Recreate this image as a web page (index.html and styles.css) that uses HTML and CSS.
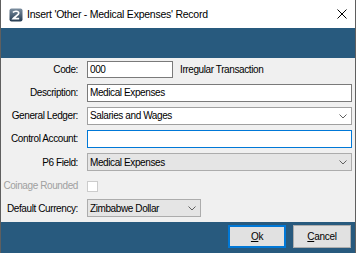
FILE: index.html
```
<!DOCTYPE html>
<html lang="en">
<head>
  <meta charset="UTF-8">
  <title>Insert Record</title>
  <link rel="stylesheet" href="styles.css">
</head>
<body>

  <div class="ventana">
    <div class="titulo">
      <svg class="icono" width="14" height="14" viewBox="0 0 14 14">
        <defs>
          <linearGradient id="g" x1="0" y1="0" x2="0" y2="1">
            <stop offset="0" stop-color="#7d8fa0"/>
            <stop offset="1" stop-color="#243b52"/>
          </linearGradient>
        </defs>
        <rect x="0.5" y="0.5" width="13" height="13" rx="2" fill="url(#g)"/>
        <path d="M4 4.5 C5 2.8 9.5 2.6 9.8 5 C10 6.8 6.5 8 4.2 10.6 L10.2 10.6" fill="none" stroke="#fff" stroke-width="1.6"/>
      </svg>
      <span class="texto-titulo">Insert 'Other - Medical Expenses' Record</span>
      <svg class="cerrar" width="10" height="10" viewBox="0 0 10 10">
        <path d="M0.5 0.5 L9.5 9.5 M9.5 0.5 L0.5 9.5" stroke="#000" stroke-width="1"/>
      </svg>
    </div>

    <div class="banda"></div>

    <div class="campos">
      <div class="fila">
        <label>Code:</label>
        <input class="caja corta" value="000">
        <span class="nota">Irregular Transaction</span>
      </div>
      <div class="fila">
        <label>Description:</label>
        <input class="caja larga" value="Medical Expenses">
      </div>
      <div class="fila">
        <label>General Ledger:</label>
        <div class="combo larga">
          <span>Salaries and Wages</span>
          <svg class="flecha" width="8" height="5" viewBox="0 0 8 5"><path d="M0.5 0.5 L4 4 L7.5 0.5" fill="none" stroke="#606060"/></svg>
        </div>
      </div>
      <div class="fila">
        <label>Control Account:</label>
        <input class="caja larga foco" value="">
      </div>
      <div class="fila alta">
        <label>P6 Field:</label>
        <div class="combo larga lista">
          <span>Medical Expenses</span>
          <svg class="flecha" width="8" height="5" viewBox="0 0 8 5"><path d="M0.5 0.5 L4 4 L7.5 0.5" fill="none" stroke="#606060"/></svg>
        </div>
      </div>
      <div class="fila">
        <label class="inactivo">Coinage Rounded</label>
        <span class="casilla"></span>
      </div>
      <div class="fila baja">
        <label>Default Currency:</label>
        <div class="combo moneda lista">
          <span>Zimbabwe Dollar</span>
          <svg class="flecha" width="8" height="5" viewBox="0 0 8 5"><path d="M0.5 0.5 L4 4 L7.5 0.5" fill="none" stroke="#606060"/></svg>
        </div>
      </div>
    </div>

    <div class="acciones">
      <button class="boton principal"><u>O</u>k</button>
      <button class="boton"><u>C</u>ancel</button>
    </div>
  </div>

</body>
</html>
```

FILE: styles.css
```
  body {
    margin: 0;
    font-family: "Liberation Sans", Arial, sans-serif;
    font-size: 10px;
    letter-spacing: -0.4px;
    color: #000;
    background-color: #2a2a2a;
  }

  .ventana {
    width: 356px;
    height: 253px;
    box-sizing: border-box;
    border-left: 1px solid #5f5f5f;
    border-right: 1px solid #5f5f5f;
    background-color: #f0f0f0;
    display: flex;
    flex-direction: column;
    overflow: hidden;
  }

  .titulo {
    height: 28px;
    background-color: #fff;
    display: flex;
    align-items: center;
    padding-left: 8px;
    padding-right: 8px;
  }

  .icono {
    margin-top: 1px;
  }

  .texto-titulo {
    margin-left: 4px;
    font-size: 10.5px;
    letter-spacing: -0.25px;
    flex: 1;
  }

  .banda {
    height: 30px;
    background-color: #285a7e;
  }

  .campos {
    padding-right: 3px;
    height: 164px;
  }

  .fila {
    display: flex;
    align-items: center;
    height: 23px;
  }

  .fila.alta {
    height: 24px;
  }

  .fila.baja {
    height: 22px;
  }

  .fila label {
    width: 77px;
    text-align: right;
    margin-right: 9px;
    white-space: nowrap;
  }

  .inactivo {
    color: #a0a0a0;
  }

  .caja, .combo {
    box-sizing: border-box;
    height: 18px;
    border: 1px solid #7a7a7a;
    background-color: #fff;
    font-family: inherit;
    font-size: 10px;
    letter-spacing: -0.4px;
    padding: 0 2px;
    margin: 0;
    outline: none;
  }

  .caja.corta {
    width: 86px;
    height: 17px;
  }

  .larga {
    flex: 1;
  }

  .caja.foco {
    border-color: #0078d7;
  }

  .nota {
    margin-left: 7px;
  }

  .combo {
    position: relative;
    display: flex;
    align-items: center;
    border-color: #a0a0a0;
  }

  .combo.lista {
    background-color: #e5e5e5;
    border-color: #acacac;
  }

  .combo.moneda {
    width: 114px;
  }

  .flecha {
    position: absolute;
    right: 4px;
    top: 6px;
  }

  .casilla {
    width: 11px;
    height: 11px;
    box-sizing: border-box;
    border: 1px solid #cccccc;
    background-color: #fff;
    margin-top: 2px;
  }

  .acciones {
    flex: 1;
    background-color: #285a7e;
    display: flex;
    justify-content: flex-end;
    gap: 7px;
    padding: 3px 4px 0 0;
  }

  .boton {
    width: 58px;
    height: 23px;
    border: 1px solid #adadad;
    background-color: #e1e1e1;
    font-family: inherit;
    font-size: 10px;
    letter-spacing: -0.3px;
    color: #000;
    padding: 0;
  }

  .boton.principal {
    border-color: #0078d7;
    box-shadow: inset 0 0 0 1px #0078d7;
  }
```
